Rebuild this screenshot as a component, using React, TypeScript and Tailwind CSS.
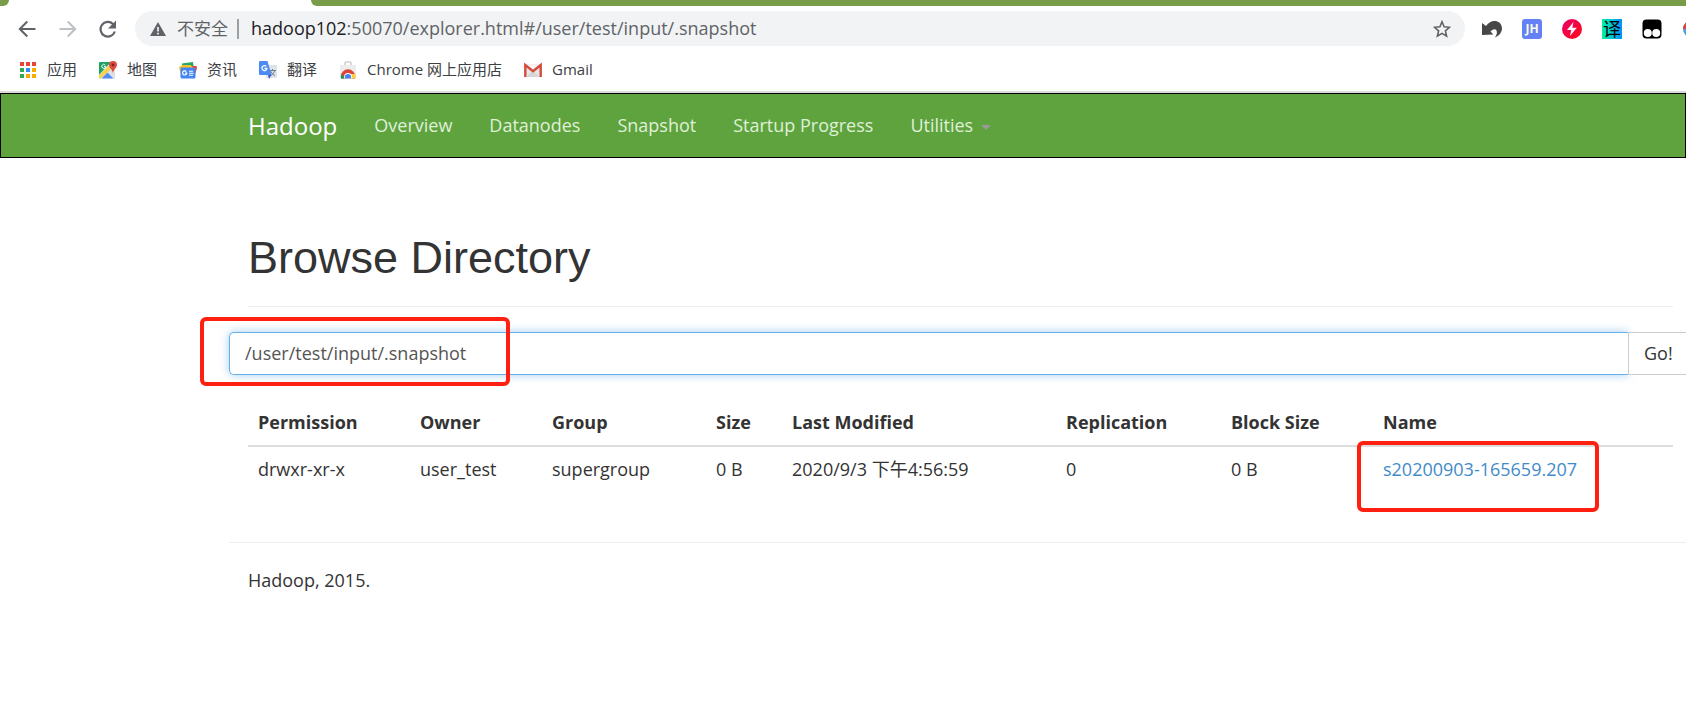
import React from "react";

const apps = ["#ea4335", "#ea4335", "#ea4335", "#34a853", "#2f8df5", "#f9ab00", "#34a853", "#f9ab00", "#f9ab00"];

function AppsIcon() {
  return (
    <svg viewBox="0 0 18 18" className="h-[18px] w-[18px]" aria-hidden="true">
      {apps.map((c, i) => (
        <rect key={i} x={1 + (i % 3) * 6} y={1 + Math.floor(i / 3) * 6} width="4" height="4" fill={c} />
      ))}
    </svg>
  );
}

function MapsIcon() {
  return (
    <svg viewBox="0 0 18 18" className="h-[18px] w-[18px]" aria-hidden="true">
      <rect y="1" width="16" height="16.500" rx="1" fill="#eceff1" />
      <path d="M0 2a1 1 0 0 1 1-1h11L0 14z" fill="#1fa463" />
      <path d="M0 14.500 11.500 3l3 3L2 17.500H0z" fill="#fbd04b" />
      <path d="m2.500 17.500 6-6 6 6z" fill="#4e8df5" />
      <path d="M9 11l3-3 4 4v5.500h-1z" fill="#dcdfe3" />
      <path d="M6.300 4.100a2 2 0 1 0 .5 1.500H5" fill="none" stroke="#fff" strokeWidth="1" />
      <path d="M14 0a4 4 0 0 1 4 4c0 2.500-3 4-4 8-1-4-4-5.500-4-8a4 4 0 0 1 4-4z" fill="#dd4b3e" />
      <circle cx="14" cy="4" r="1.400" fill="#7d231c" />
    </svg>
  );
}

function NewsIcon() {
  return (
    <svg viewBox="0 0 18 18" className="h-[18px] w-[18px]" aria-hidden="true">
      <path d="M3 2.500 14 1l1 7H3z" fill="#22a565" />
      <path d="M0 6 3 4.500l4 5 -5.500 3z" fill="#fbc02d" />
      <path d="M10 5 17.500 5 18 7l-1.500 5H10z" fill="#ea4335" />
      <path d="M2.500 4h9l3 3H3z" fill="#fbc02d" />
      <rect x="1.500" y="6.500" width="15" height="11" rx="1.500" fill="#4285f4" />
      <path d="M7.300 10.500a2.100 2.100 0 1 0 .5 1.700H6" fill="none" stroke="#fff" strokeWidth="1.200" />
      <path d="M10 10.200h4M10 12.200h4.500M10 14.200h4" stroke="#fff" strokeWidth="1.100" />
    </svg>
  );
}

function TranslateIcon() {
  return (
    <svg viewBox="0 0 18 18" className="h-[18px] w-[18px]" aria-hidden="true">
      <rect x="7" y="4" width="11" height="13" rx="1" fill="#dfe2e6" />
      <path d="M10 9.500h7M13.500 8v1.500M11.500 9.500c.5 2 2 4 4.500 5M15.700 9.500c-.5 2-2 4-4 5" fill="none" stroke="#6b7f93" strokeWidth="1" />
      <path d="m9 13.500 3.500 0-2.500 4.500z" fill="#2a56c6" />
      <path d="M1 0h7.500l4 14H1a1 1 0 0 1-1-1V1a1 1 0 0 1 1-1z" fill="#4c8bf5" />
      <path d="M7.300 5.300a2.500 2.500 0 1 0 .7 2H5.500" fill="none" stroke="#fff" strokeWidth="1.300" />
    </svg>
  );
}

function StoreIcon() {
  return (
    <svg viewBox="0 0 18 18" className="h-[18px] w-[18px]" aria-hidden="true">
      <defs>
        <clipPath id="bag">
          <rect x="1" y="4" width="16" height="13.500" rx="1" />
        </clipPath>
      </defs>
      <path d="M6 5V2.200A1.200 1.200 0 0 1 7.200 1h3.600A1.200 1.200 0 0 1 12 2.200V5" fill="none" stroke="#cfcfcf" strokeWidth="1.600" />
      <rect x="1" y="4" width="16" height="13.500" rx="1" fill="#ececec" />
      <g clipPath="url(#bag)">
        <circle cx="9" cy="15.500" r="7.200" fill="#db4437" />
        <path d="M2.400 12.500 7 20H1.500z" fill="#0f9d58" />
        <path d="M9 13h7.500v7H9z" fill="#ffcd40" />
        <circle cx="9" cy="16" r="3.900" fill="#fff" />
        <circle cx="9" cy="16" r="3.100" fill="#4285f4" />
      </g>
    </svg>
  );
}

function GmailIcon() {
  return (
    <svg viewBox="0 0 18 18" className="h-[18px] w-[18px]" aria-hidden="true">
      <rect x="1" y="3" width="16" height="13" rx="1" fill="#e6e6e6" />
      <path d="M2.500 16 9 9.500l6.500 6.500z" fill="#d6d6d6" />
      <path d="M2 3.500 9 9l7-5.500" fill="#f5f5f5" />
      <path d="M1.300 16V4L9 10.300 16.700 4v12" fill="none" stroke="#d54b3d" strokeWidth="2.400" />
    </svg>
  );
}

const bookmarks = [
  { label: "应用", icon: <AppsIcon /> },
  { label: "地图", icon: <MapsIcon /> },
  { label: "资讯", icon: <NewsIcon /> },
  { label: "翻译", icon: <TranslateIcon /> },
  { label: "Chrome 网上应用店", icon: <StoreIcon /> },
  { label: "Gmail", icon: <GmailIcon /> },
];

function Extensions() {
  return (
    <div className="flex shrink-0 items-center gap-5">
      <button aria-label="Undo" className="h-5 w-5">
        <svg viewBox="0 0 20 20" className="h-5 w-5">
          <path d="M0 4v12l11.500-.5-3-3c1.500-2.200 4.600-3.300 5.900-1.200 1.200 2.200.2 5.200-1.600 7.200C17 17 20 13.500 20 9c-.5-4.500-3.500-7-7.500-7C9 2 6 4 4 7z" fill="#474747" />
        </svg>
      </button>
      <button className="flex h-5 w-5 items-center justify-center rounded-[3px] bg-[#6482f6] text-[12px] leading-5 font-bold text-[#fdfbe4]">JH</button>
      <button aria-label="Lightning" className="h-5 w-5">
        <svg viewBox="0 0 20 20" className="h-5 w-5">
          <defs>
            <linearGradient id="bolt" x1="0" y1="0" x2="1" y2="1">
              <stop offset="0" stopColor="#e9006b" />
              <stop offset="1" stopColor="#ff0a14" />
            </linearGradient>
          </defs>
          <circle cx="10" cy="10" r="10" fill="url(#bolt)" />
          <path d="M11.500 3 5 11h4.300L8 17l6.800-8.300h-4.500z" fill="#fff" />
        </svg>
      </button>
      <button className="flex h-5 w-5 items-center justify-center bg-linear-to-r from-[#10f09a] to-[#0a90ff] text-[18px] leading-5 text-black">译</button>
      <button aria-label="Scripts" className="h-5 w-5">
        <svg viewBox="0 0 20 20" className="h-5 w-5">
          <rect x="0.500" y="0.500" width="19" height="19" rx="4" fill="#000" />
          <circle cx="5.800" cy="14" r="4" fill="#fff" />
          <circle cx="14.200" cy="14" r="4" fill="#fff" />
        </svg>
      </button>
      <button aria-label="More" className="h-5 w-5">
        <svg viewBox="0 0 20 20" className="h-5 w-5">
          <circle cx="10" cy="10" r="9" fill="#4aa3cf" />
          <path d="M1 10a9 9 0 0 1 9-9v9z" fill="#d9473c" />
        </svg>
      </button>
    </div>
  );
}

function BrowserChrome() {
  return (
    <header className="border-b-2 border-[#dadce0] bg-white text-[#3c4043]">
      <div className="bg-[#779d49]">
        <div className="flex h-[6px] w-[320px] justify-between bg-white">
          <span className="w-[9px] rounded-br-lg bg-[#779d49]" />
          <span className="w-[9px] rounded-bl-lg bg-[#779d49]" />
        </div>
      </div>
      <div className="flex items-center pt-[5px] pl-[17px]">
        <div className="flex shrink-0 gap-5">
          <button aria-label="Back" className="h-5 w-5">
            <svg viewBox="0 0 20 20" className="h-5 w-5" fill="none" stroke="#5f6368" strokeWidth="2">
              <path d="M18.500 10H3M10.300 2.500 2.800 10l7.500 7.500" />
            </svg>
          </button>
          <button aria-label="Forward" className="h-5 w-5">
            <svg viewBox="0 0 20 20" className="h-5 w-5" fill="none" stroke="#bdc1c6" strokeWidth="2">
              <path d="M2.500 10H18M10.700 2.500l7.500 7.500-7.500 7.500" />
            </svg>
          </button>
          <button aria-label="Reload" className="h-5 w-5">
            <svg viewBox="0 0 20 20" className="h-5 w-5">
              <path d="M17.800 12.500A7.300 7.300 0 1 1 16 5L17 6.800" fill="none" stroke="#5f6368" strokeWidth="2.200" />
              <path d="M19 1.500v8h-8z" fill="#5f6368" />
            </svg>
          </button>
        </div>
        <div className="ml-[18px] flex h-[35px] flex-1 items-center rounded-full bg-[#f1f3f4] pr-[14px] pl-[15px]">
          <svg viewBox="0 0 16 16" className="h-4 w-4 shrink-0" aria-hidden="true">
            <path d="M8 1 16 15H0z" fill="#5f6368" />
            <path d="M8 6v4.500M8 11.700v1.800" stroke="#f1f3f4" strokeWidth="1.700" />
          </svg>
          <span className="ml-[11px] text-[17px] whitespace-nowrap text-[#5f6368]">不安全</span>
          <span className="ml-[9px] h-5 w-[2px] bg-[#9aa0a6]" />
          <span className="ml-3 flex-1 text-[18px] whitespace-nowrap text-[#5f6368]">
            <span className="text-[#202124]">hadoop102</span>:50070/explorer.html#/user/test/input/.snapshot
          </span>
          <button aria-label="Bookmark" className="h-[18px] w-[18px]">
            <svg viewBox="0 0 18 18" className="h-[18px] w-[18px]" fill="none" stroke="#5f6368" strokeWidth="1.600">
              <path d="m9 1.800 2.100 5 5.400.5-4.100 3.600 1.200 5.300L9 13.400l-4.600 2.800 1.200-5.300-4.100-3.600 5.400-.5z" />
            </svg>
          </button>
        </div>
        <div className="-mr-4 ml-[17px]">
          <Extensions />
        </div>
      </div>
      <nav className="flex h-[45px] items-center gap-[22px] pt-[2px] pl-[19px] text-[15px]">
        {bookmarks.map((b) => (
          <a key={b.label} href="#" className="flex items-center gap-[10px] whitespace-nowrap">
            {b.icon}
            <span>{b.label}</span>
          </a>
        ))}
      </nav>
    </header>
  );
}

const links = ["Overview", "Datanodes", "Snapshot", "Startup Progress"];

function Navbar() {
  return (
    <nav className="flex h-[65px] items-center gap-[37px] border border-black bg-[#5fa33e] pl-[247px] text-[18px] text-[#dff0d8]">
      <a href="#" className="text-[24px] text-white">Hadoop</a>
      {links.map((l) => (
        <a key={l} href="#" className="whitespace-nowrap">{l}</a>
      ))}
      <a href="#" className="flex items-center gap-2">
        Utilities
        <svg viewBox="0 0 10 5" className="mt-1 h-[5px] w-[10px]" aria-hidden="true">
          <path d="M0 0h10L5 5z" fill="#999" />
        </svg>
      </a>
    </nav>
  );
}

const columns = [
  { title: "Permission", width: "w-[162px]", value: "drwxr-xr-x" },
  { title: "Owner", width: "w-[132px]", value: "user_test" },
  { title: "Group", width: "w-[164px]", value: "supergroup" },
  { title: "Size", width: "w-[76px]", value: "0 B" },
  { title: "Last Modified", width: "w-[274px]", value: "2020/9/3 下午4:56:59" },
  { title: "Replication", width: "w-[165px]", value: "0" },
  { title: "Block Size", width: "w-[152px]", value: "0 B" },
];

function Explorer() {
  return (
    <main className="-mr-[6px] pl-[229px] text-[18px] leading-[26px] text-[#333]">
      <div className="mx-[19px] border-b border-[#eee] pt-[75px] pb-[23px]">
        <h1 className="font-['Liberation_Sans',sans-serif] text-[45px] leading-[50px]">Browse Directory</h1>
      </div>
      <form className="relative mt-[25px] flex h-[43px]" onSubmit={(e) => e.preventDefault()}>
        <input
          aria-label="Directory"
          defaultValue="/user/test/input/.snapshot"
          className="min-w-0 flex-1 rounded-l-[5px] border border-r-0 border-[#66afe9] px-[15px] pb-[2px] text-[#555] shadow-[0_0_10px_rgba(102,175,233,0.6)] outline-none"
        />
        <button className="w-16 rounded-r-[5px] border border-[#ccc] bg-white px-[15px] pb-[2px] text-left">Go!</button>
        <span className="pointer-events-none absolute -top-[15px] -left-[29px] h-[69px] w-[310px] rounded-md border-4 border-[#ff2012]" />
      </form>
      <div className="mx-[19px] mt-[24px]">
        <table className="w-full table-fixed text-left">
          <thead>
            <tr className="border-b-2 border-[#ddd]">
              {columns.map((c) => (
                <th key={c.title} className={`${c.width} px-[10px] py-[10px] font-bold whitespace-nowrap`}>{c.title}</th>
              ))}
              <th className="px-[10px] py-[10px] font-bold">Name</th>
            </tr>
          </thead>
          <tbody>
            <tr>
              {columns.map((c) => (
                <td key={c.title} className="px-[10px] py-[9px] whitespace-nowrap">{c.value}</td>
              ))}
              <td className="relative px-[10px] py-[9px]">
                <a href="#" className="text-[#428bca]">s20200903-165659.207</a>
                <span className="pointer-events-none absolute -top-[6px] -left-4 h-[71px] w-[242px] rounded-md border-4 border-[#ff2012]" />
              </td>
            </tr>
          </tbody>
        </table>
      </div>
      <footer className="mt-[51px] border-t border-[#eee] px-[19px] pt-[24px]">
        <p>Hadoop, 2015.</p>
      </footer>
    </main>
  );
}

export default function App() {
  return (
    <div className="min-h-screen overflow-hidden bg-white font-['Open_Sans','Noto_Sans_CJK_SC',sans-serif]">
      <BrowserChrome />
      <Navbar />
      <Explorer />
    </div>
  );
}
